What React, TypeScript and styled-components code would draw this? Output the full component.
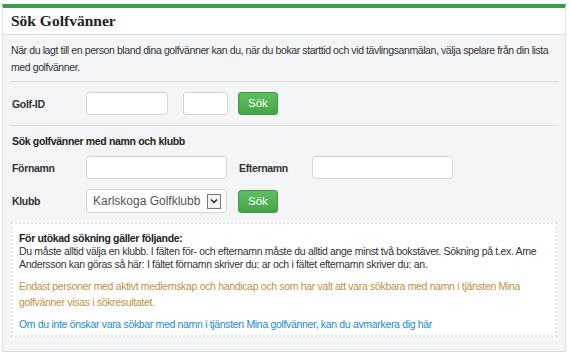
import React from "react";
import styled, { createGlobalStyle } from "styled-components";

const Global = createGlobalStyle`
  html, body { margin: 0; padding: 0; background: #fff; }
  body { font-family: "Liberation Sans", Arial, sans-serif; color: #333; }
`;

const Panel = styled.section`
  margin: 4px 0 0 2px;
  width: 564px;
  box-sizing: border-box;
  border-top: 4px solid #3d9c4b;
  border-left: 1px solid #e2e2e2;
  border-right: 1px solid #e2e2e2;
  border-bottom: 1px solid #dcdcdc;
`;

const Header = styled.header`
  height: 26px;
  background: #fff;
  border-bottom: 1px solid #dedede;
  display: flex;
  align-items: center;
  padding-left: 8px;
`;

const Title = styled.h1`
  margin: 0;
  font-family: "Liberation Serif", "Times New Roman", serif;
  font-weight: bold;
  font-size: 15.5px;
  color: #222;
`;

const Body = styled.div`
  background: #f4f5f6;
  padding: 7px 6px 14px 8px;
  font-size: 10.5px;
  letter-spacing: -0.33px;
`;

const Intro = styled.p`
  margin: 0;
  line-height: 17px;
  letter-spacing: -0.4px;
  padding-bottom: 5px;
  border-bottom: 1px solid #e0e0e0;
`;

const Row = styled.div<{ $top?: number }>`
  display: flex;
  align-items: center;
  margin-top: ${(p) => p.$top ?? 0}px;
`;

const Label = styled.label<{ $w: number }>`
  width: ${(p) => p.$w}px;
  font-size: 10.5px;
  font-weight: bold;
  color: #333;
  padding-left: 1px;
  box-sizing: border-box;
`;

const Input = styled.input<{ $w: number; $gap?: number }>`
  width: ${(p) => p.$w}px;
  height: 23px;
  box-sizing: border-box;
  border: 1px solid #d6d6d6;
  border-radius: 3px;
  background: #fff;
  margin: 0 ${(p) => p.$gap ?? 11}px 0 0;
  outline: none;
`;

const SelectBox = styled.div`
  width: 141px;
  height: 24px;
  box-sizing: border-box;
  border: 1px solid #d6d6d6;
  border-radius: 3px;
  background: #fff;
  display: flex;
  align-items: center;
  justify-content: space-between;
  padding: 0 5px 0 6px;
  margin-right: 11px;
  font-size: 12px;
  letter-spacing: 0;
  color: #555;
`;

const Arrow = styled.span`
  width: 14px;
  height: 15px;
  box-sizing: border-box;
  border: 1px solid #777;
  background: #f3f3f3;
  display: flex;
  align-items: center;
  justify-content: center;
`;

const Button = styled.button`
  height: 23px;
  padding: 0 9px;
  border: 1px solid #3f9a43;
  border-radius: 3px;
  background: linear-gradient(#62bd62, #46a446);
  color: #fff;
  font-family: "Liberation Sans", Arial, sans-serif;
  font-size: 11.5px;
  line-height: 21px;
`;

const Divider = styled.hr`
  border: 0;
  border-top: 1px solid #e0e0e0;
  margin: 10px 0 0 0;
`;

const SubHead = styled.h2`
  margin: 9px 0 0 1px;
  font-size: 10.5px;
  font-weight: bold;
  line-height: 13px;
  color: #222;
`;

const InfoBox = styled.div`
  margin: 9px 2px 0 0;
  background: #fff;
  border: 2px dotted #e2e2e2;
  padding: 8px 7px 3px 6px;
  line-height: 13px;
`;

const InfoHead = styled.div`
  font-weight: bold;
  color: #222;
`;

const InfoText = styled.p<{ $color?: string; $top?: number; $lh?: number }>`
  margin: ${(p) => p.$top ?? 0}px 0 0 0;
  color: ${(p) => p.$color ?? "#333"};
  line-height: ${(p) => p.$lh ?? 13}px;
`;

const Link = styled.a`
  color: #1b8bc8;
  text-decoration: none;
`;

export default function App() {
  return (
    <>
      <Global />
      <Panel>
        <Header>
          <Title>Sök Golfvänner</Title>
        </Header>
        <Body>
          <Intro>
            När du lagt till en person bland dina golfvänner kan du, när du bokar starttid och vid tävlingsanmälan, välja spelare från din lista med golfvänner.
          </Intro>
          <Row $top={10}>
            <Label $w={75}>Golf-ID</Label>
            <Input $w={82} $gap={15} />
            <Input $w={45} $gap={10} />
            <Button>Sök</Button>
          </Row>
          <Divider />
          <SubHead>Sök golfvänner med namn och klubb</SubHead>
          <Row $top={8}>
            <Label $w={75}>Förnamn</Label>
            <Input $w={141} />
            <Label $w={74}>Efternamn</Label>
            <Input $w={141} />
          </Row>
          <Row $top={10}>
            <Label $w={75}>Klubb</Label>
            <SelectBox>
              Karlskoga Golfklubb
              <Arrow>
                <svg width="8" height="6" viewBox="0 0 8 6">
                  <path d="M1 1.5 L4 4.5 L7 1.5" stroke="#222" strokeWidth="1.4" fill="none" />
                </svg>
              </Arrow>
            </SelectBox>
            <Button>Sök</Button>
          </Row>
          <InfoBox>
            <InfoHead>För utökad sökning gäller följande:</InfoHead>
            <InfoText>
              Du måste alltid välja en klubb. I fälten för- och efternamn måste du alltid ange minst två bokstäver. Sökning på t.ex. Arne Andersson kan göras så här: I fältet förnamn skriver du: ar och i fältet efternamn skriver du: an.
            </InfoText>
            <InfoText $color="#bf8f3f" $top={7} $lh={16}>
              Endast personer med aktivt medlemskap och handicap och som har valt att vara sökbara med namn i tjänsten Mina golfvänner visas i sökresultatet.
            </InfoText>
            <InfoText $color="#1b8bc8" $top={6} $lh={16}>
              <Link href="#">Om du inte önskar vara sökbar med namn i tjänsten Mina golfvänner, kan du avmarkera dig här</Link>
            </InfoText>
          </InfoBox>
        </Body>
      </Panel>
    </>
  );
}
